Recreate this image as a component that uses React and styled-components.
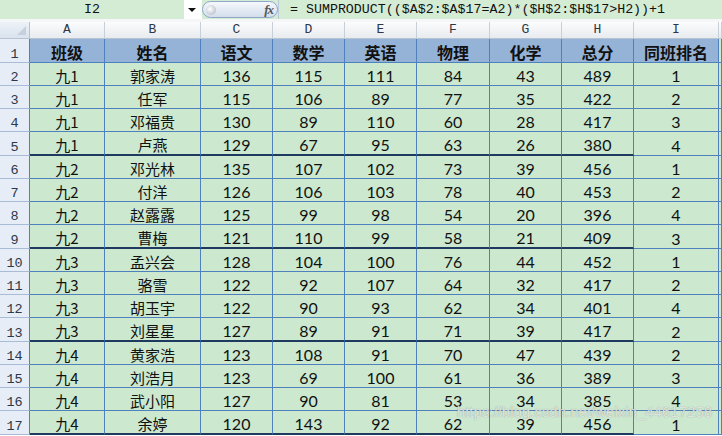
import React from 'react';
import styled, { createGlobalStyle } from 'styled-components';

const GlobalStyle = createGlobalStyle`
  html, body {
    margin: 0;
    padding: 0;
    width: 722px;
    height: 436px;
    overflow: hidden;
    background: #ffffff;
  }
`;

const COLS = '30px 75px 96px 72px 72px 72px 73px 72px 72px 85px 1fr';
const GRID = '#4f81bd';
const THICK = '#1f3a5f';
const CJK = '"Noto Sans CJK SC", "Noto Sans", sans-serif';
const NUM = 'Lato, "Noto Sans CJK SC", sans-serif';
const MONO = '"Liberation Mono", "DejaVu Sans Mono", monospace';

const Page = styled.div`
  position: relative;
  width: 722px;
  height: 436px;
  overflow: hidden;
`;

const FormulaBar = styled.div`
  display: flex;
  height: 19px;
  background: #d4ebd4;
  border-bottom: 3px solid #f4f6f8;
`;

const NameBox = styled.div`
  width: 184px;
  display: flex;
  align-items: center;
  justify-content: center;
  font-family: ${MONO};
  font-size: 13.3px;
  color: #111;
`;

const Dropdown = styled.div`
  width: 18px;
  background: #ffffff;
  display: flex;
  align-items: center;
  justify-content: center;

  &::after {
    content: '';
    border-left: 4px solid transparent;
    border-right: 4px solid transparent;
    border-top: 4px solid #111;
    margin-left: -2px;
  }
`;

const Pill = styled.div`
  width: 76px;
  margin: 1px 0;
  box-sizing: border-box;
  border: 1px solid #8fa7c8;
  border-radius: 9px;
  background: linear-gradient(#f6f8fb, #d3deec);
  display: flex;
  align-items: center;
  justify-content: space-between;
  padding: 0 4px 0 3px;
`;

const Knob = styled.span`
  width: 10px;
  height: 10px;
  border-radius: 50%;
  background: radial-gradient(circle at 40% 40%, #ffffff, #a9b2bd);
`;

const Fx = styled.span`
  font-family: "Liberation Serif", serif;
  font-style: italic;
  font-weight: bold;
  font-size: 13px;
  color: #555;
  letter-spacing: -1px;
`;

const Formula = styled.div`
  flex: 1;
  display: flex;
  align-items: center;
  padding-left: 11px;
  border-left: 1px solid #b9c7d8;
  font-family: ${MONO};
  font-size: 13.3px;
  color: #111;
  white-space: pre;
`;

const Row = styled.div`
  display: grid;
  grid-template-columns: ${COLS};
  height: ${p => p.$h}px;
`;

const Corner = styled.div`
  box-sizing: border-box;
  background: linear-gradient(#eef2f8, #d9e2ee);
  border-right: 1px solid #b7c3d3;
  border-bottom: 1px solid #b7c3d3;
  position: relative;

  &::after {
    content: '';
    position: absolute;
    right: 3px;
    bottom: 3px;
    border-left: 9px solid transparent;
    border-bottom: 9px solid #c6cfdc;
  }
`;

const ColHead = styled.div`
  box-sizing: border-box;
  background: linear-gradient(#fbfcfd, #e8ebef);
  border-right: 1px solid #c9cfd7;
  border-bottom: 1px solid #b7c3d3;
  display: flex;
  align-items: flex-end;
  justify-content: center;
  padding-bottom: 1px;
  font-family: ${MONO};
  font-size: 13px;
  color: #2d3747;
`;

const RowHead = styled.div`
  box-sizing: border-box;
  background: #e6edf7;
  border-right: 1px solid ${GRID};
  border-bottom: 1px solid #a9bcd6;
  display: flex;
  align-items: flex-end;
  justify-content: center;
  padding-bottom: 0;
  font-family: ${MONO};
  font-size: 13.5px;
  color: #2d3747;
`;

const Cell = styled.div`
  box-sizing: border-box;
  background: ${p => (p.$head ? '#95b3d7' : '#cce8cf')};
  border-right: 1px solid ${GRID};
  border-bottom: ${p => (p.$thick ? `2px solid ${THICK}` : `1px solid ${GRID}`)};
  display: flex;
  align-items: center;
  justify-content: center;
  padding-top: ${p => (p.$head ? 2 : 3)}px;
  font-family: ${p => (p.$num ? NUM : CJK)};
  font-size: ${p => (p.$head ? 16 : p.$num ? 16 : 15)}px;
  font-weight: ${p => (p.$head ? 700 : 400)};
  color: #111;
  white-space: nowrap;
  overflow: hidden;
`;

const Watermark = styled.div`
  position: absolute;
  right: 10px;
  top: 403px;
  font-family: "Liberation Sans", Arial, sans-serif;
  font-size: 15px;
  color: rgba(236, 240, 236, 0.85);
  text-shadow: 0 0 1px rgba(110, 110, 110, 0.7);
  pointer-events: none;
`;

const letters = ['A', 'B', 'C', 'D', 'E', 'F', 'G', 'H', 'I', ''];
const headers = ['班级', '姓名', '语文', '数学', '英语', '物理', '化学', '总分', '同班排名', ''];

const rows = [
  ['九1', '郭家涛', 136, 115, 111, 84, 43, 489, 1],
  ['九1', '任军', 115, 106, 89, 77, 35, 422, 2],
  ['九1', '邓福贵', 130, 89, 110, 60, 28, 417, 3],
  ['九1', '卢燕', 129, 67, 95, 63, 26, 380, 4],
  ['九2', '邓光林', 135, 107, 102, 73, 39, 456, 1],
  ['九2', '付洋', 126, 106, 103, 78, 40, 453, 2],
  ['九2', '赵露露', 125, 99, 98, 54, 20, 396, 4],
  ['九2', '曹梅', 121, 110, 99, 58, 21, 409, 3],
  ['九3', '孟兴会', 128, 104, 100, 76, 44, 452, 1],
  ['九3', '骆雪', 122, 92, 107, 64, 32, 417, 2],
  ['九3', '胡玉宇', 122, 90, 93, 62, 34, 401, 4],
  ['九3', '刘星星', 127, 89, 91, 71, 39, 417, 2],
  ['九4', '黄家浩', 123, 108, 91, 70, 47, 439, 2],
  ['九4', '刘浩月', 123, 69, 100, 61, 36, 389, 3],
  ['九4', '武小阳', 127, 90, 81, 53, 34, 385, 4],
  ['九4', '余婷', 120, 143, 92, 62, 39, 456, 1],
];

export default function App() {
  return (
    <Page>
      <GlobalStyle />
      <FormulaBar>
        <NameBox>I2</NameBox>
        <Dropdown />
        <Pill>
          <Knob />
          <Fx>fx</Fx>
        </Pill>
        <Formula>= SUMPRODUCT(($A$2:$A$17=A2)*($H$2:$H$17&gt;H2))+1</Formula>
      </FormulaBar>

      <Row $h={17}>
        <Corner />
        {letters.map((l, i) => <ColHead key={i}>{l}</ColHead>)}
      </Row>

      <Row $h={24}>
        <RowHead>1</RowHead>
        {headers.map((h, i) => (
          <Cell key={i} $head={i < 9}>{h}</Cell>
        ))}
      </Row>

      {rows.map((r, ri) => {
        const groupEnd = ri % 4 === 3;
        return (
          <Row key={ri} $h={groupEnd ? 24 : 23}>
            <RowHead>{ri + 2}</RowHead>
            {r.map((v, ci) => (
              <Cell key={ci} $num={ci > 1} $thick={groupEnd && ci < 8}>
                {v}
              </Cell>
            ))}
            <Cell />
          </Row>
        );
      })}

      <Watermark>https://blog.csdn.net/weixin_44617258</Watermark>
    </Page>
  );
}
